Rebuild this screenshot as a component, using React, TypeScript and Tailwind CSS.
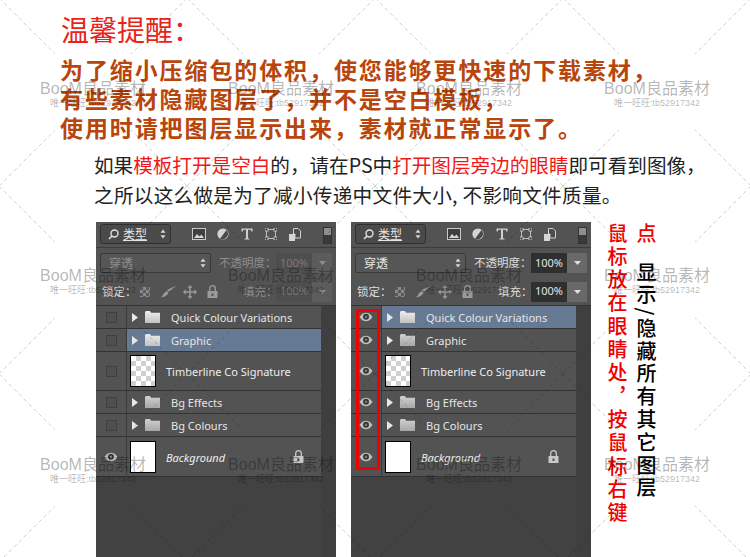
import React from "react";

const cjk = "font-['Noto_Sans_CJK_SC',sans-serif]";

function Eye() {
  return (
    <svg width="14" height="10" viewBox="0 0 14 10">
      <path d="M0.5 5C3 1.5 5 0.8 7 0.8S11 1.5 13.5 5C11 8.5 9 9.2 7 9.2S3 8.5 0.5 5Z" fill="#c0c0c0" />
      <circle cx="7" cy="4.8" r="3" fill="#3a3a3a" />
      <circle cx="7" cy="4.8" r="1.1" fill="#8a8a8a" />
    </svg>
  );
}

function Folder({ dark }: { dark?: boolean }) {
  const id = dark ? "fd" : "fl";
  return (
    <svg width="15" height="12" viewBox="0 0 15 12">
      <defs>
        <linearGradient id={id} x1="0" y1="0" x2="0" y2="1">
          <stop offset="0" stopColor={dark ? "#d0d0d0" : "#eeeeee"} />
          <stop offset="1" stopColor={dark ? "#a8a8a8" : "#c2c2c2"} />
        </linearGradient>
      </defs>
      <path d="M0 12V1.2L0.8 0H5L6 1.8H15V12Z" fill={`url(#${id})`} />
    </svg>
  );
}

function Lock({ color = "#c8c8c8" }: { color?: string }) {
  return (
    <svg width="11" height="13" viewBox="0 0 11 13">
      <path d="M2.7 6V3.5a2.8 2.8 0 0 1 5.6 0V6" fill="none" stroke={color} strokeWidth="1.3" />
      <rect x="0.5" y="6" width="10" height="7" fill={color} />
      <rect x="4.5" y="8.5" width="2" height="2.5" fill="#555" />
    </svg>
  );
}

function Chevron() {
  return (
    <svg width="6" height="10" viewBox="0 0 6 10">
      <path d="M3 0.5L5.5 3.8H0.5ZM3 9.5L5.5 6.2H0.5Z" fill="#d8d8d8" />
    </svg>
  );
}

function TopIcons() {
  return (
    <div className="flex items-center h-[20px]">
      <svg className="ml-[21px]" width="14" height="12" viewBox="0 0 14 12">
        <rect x="0.5" y="0.5" width="13" height="11" fill="#3f3f3f" stroke="#c9c9c9" />
        <path d="M2 10L5 6L7.5 8.5L9.5 6.5L12 10Z" fill="#d5d5d5" />
      </svg>
      <svg className="ml-[11px]" width="12" height="12" viewBox="0 0 12 12">
        <circle cx="6" cy="6" r="5.6" fill="#d4d4d4" />
        <path d="M9.5 2A5.6 5.6 0 0 1 3 10.8Z" fill="#4a4a4a" />
      </svg>
      <svg className="ml-[12px]" width="12" height="12" viewBox="0 0 12 12">
        <path d="M0.5 0.5H11.5V3.5H10.5L9.5 1.8H7V10.2L8.5 10.8V11.5H3.5V10.8L5 10.2V1.8H2.5L1.5 3.5H0.5Z" fill="#d0d0d0" />
      </svg>
      <svg className="ml-[12px]" width="12" height="12" viewBox="0 0 12 12">
        <rect x="1.5" y="1.5" width="9" height="9" fill="none" stroke="#bdbdbd" />
        <rect x="0" y="0" width="3" height="3" fill="#333" stroke="#d8d8d8" strokeWidth="0.8" />
        <rect x="9" y="0" width="3" height="3" fill="#333" stroke="#d8d8d8" strokeWidth="0.8" />
        <rect x="0" y="9" width="3" height="3" fill="#333" stroke="#d8d8d8" strokeWidth="0.8" />
        <rect x="9" y="9" width="3" height="3" fill="#333" stroke="#d8d8d8" strokeWidth="0.8" />
      </svg>
      <svg className="ml-[12px]" width="12" height="13" viewBox="0 0 12 13">
        <path d="M4.5 0.5H9L11.5 3V10H6V6H4.5Z" fill="#4c4c4c" stroke="#d0d0d0" />
        <rect x="0" y="6" width="6" height="7" fill="#d4d4d4" />
      </svg>
    </div>
  );
}

function Row({
  name,
  h,
  eye,
  selected,
  folder,
  thumb,
  italic,
  lock,
  dark,
}: {
  name: string;
  h: string;
  eye: boolean;
  selected: boolean;
  folder?: boolean;
  thumb?: "check" | "white";
  italic?: boolean;
  lock?: boolean;
  dark?: boolean;
}) {
  return (
    <div className={`flex ${h} border-b border-[#333333] ${selected ? "bg-[#667a94]" : "bg-[#535353]"}`}>
      <div className="w-[31px] shrink-0 flex items-center justify-center border-r border-[#3a3a3a] bg-[#535353]">
        {eye ? <Eye /> : <div className="w-[11px] h-[11px] border border-[#3f3f3f] bg-[#4f4f4f]" />}
      </div>
      {folder ? (
        <div className="flex items-center flex-1">
          <svg className="ml-[5px]" width="6" height="9" viewBox="0 0 6 9">
            <path d="M0 0L6 4.5L0 9Z" fill="#e8e8e8" />
          </svg>
          <div className="ml-[7px] flex">
            <Folder dark={dark} />
          </div>
          <span className="ml-[11px] mt-[3px] text-[11px] text-[#e6e6e6] whitespace-nowrap">{name}</span>
        </div>
      ) : (
        <div className="flex items-center flex-1 pl-[3px]">
          <div
            className={`w-[26px] h-[32px] border border-black ${
              thumb === "check"
                ? "bg-white bg-[repeating-conic-gradient(#cfcfcf_0_25%,#ffffff_0_50%)] bg-[length:10px_10px]"
                : "bg-white"
            }`}
          />
          <span className={`ml-[10px] mt-[3px] text-[11px] text-[#eeeeee] whitespace-nowrap ${italic ? "italic" : ""}`}>{name}</span>
          {lock && (
            <div className="ml-auto mr-[17px] flex">
              <Lock />
            </div>
          )}
        </div>
      )}
    </div>
  );
}

function Panel({ active }: { active: boolean }) {
  const label = active ? "text-[#dcdcdc]" : "text-[#8e8e8e]";
  const numBox = active ? "bg-[#2f2f2f] text-[#e4e4e4]" : "bg-[#4e4e4e] text-[#7a7a7a]";
  const drop = active ? "bg-[#696969]" : "bg-[#5c5c5c]";
  const arrow = active ? "#e0e0e0" : "#8c8c8c";
  return (
    <div className="relative w-[240px] h-[335px] bg-[#3f3f3f] shrink-0 flex flex-col font-['Noto_Sans',sans-serif] overflow-hidden">
      <div className="h-[26px] bg-[#535353] border-b border-[#3c3c3c] flex items-start pt-[2px] pl-[4px]">
        <div className="w-[71px] h-[20px] rounded-[3px] border border-[#2f2f2f] bg-[#4a4a4a] flex items-center pl-[7px] pr-[4px]">
          <svg width="11" height="11" viewBox="0 0 11 11">
            <circle cx="6.5" cy="4.5" r="3.5" fill="none" stroke="#e0e0e0" strokeWidth="1.4" />
            <path d="M4 7L1 10" stroke="#e0e0e0" strokeWidth="1.6" />
          </svg>
          <span className={`ml-[4px] text-[12px] leading-none text-[#e6e6e6] underline ${cjk}`}>类型</span>
          <div className="ml-auto flex">
            <Chevron />
          </div>
        </div>
        <TopIcons />
        <div className="ml-[22px] mt-[3px] w-[9px] h-[17px] border border-[#333] bg-[linear-gradient(#8e8e8e_0_50%,#3a3a3a_50%_100%)]" />
      </div>
      <div className="h-[30px] bg-[#535353] flex items-center pl-[4px]">
        <div className={`w-[111px] h-[20px] rounded-[2px] border border-[#3a3a3a] bg-[#565656] flex items-center pl-[8px] pr-[4px] ${cjk}`}>
          <span className={`text-[12px] leading-none ${active ? "text-[#e6e6e6]" : "text-[#8e8e8e]"}`}>穿透</span>
          <div className="ml-auto flex">
            <Chevron />
          </div>
        </div>
        <span className={`ml-[8px] w-[57px] text-[11.5px] leading-none whitespace-nowrap ${label} ${cjk}`}>不透明度：</span>
        <div className={`w-[36px] h-[20px] flex items-center justify-center text-[11px] ${numBox}`}>100%</div>
        <div className={`w-[20px] h-[20px] flex items-center justify-center ${drop}`}>
          <svg width="7" height="4" viewBox="0 0 7 4">
            <path d="M0 0H7L3.5 4Z" fill={arrow} />
          </svg>
        </div>
      </div>
      <div className="h-[28px] bg-[#535353] border-b border-[#333333] flex items-center pl-[6px]">
        <span className={`w-[38px] text-[11.5px] leading-none text-[#dcdcdc] whitespace-nowrap ${cjk}`}>锁定：</span>
        <div className="w-[10px] h-[10px] bg-[repeating-conic-gradient(#8a8a8a_0_25%,#5a5a5a_0_50%)] bg-[length:6px_6px]" />
        <svg className="ml-[10px]" width="18" height="13" viewBox="0 0 16 12">
          <path d="M15 0.5L8 6L6 4.5L15 0.5ZM6 5.5L7.5 7C6.5 10 3 11.5 0.5 11.5C2.5 10 3 7 6 5.5Z" fill="#9a9a9a" />
        </svg>
        <svg className="ml-[5px]" width="14" height="14" viewBox="0 0 13 13">
          <path d="M6.5 0L9 2.5H7.2V5.8H10.5V4L13 6.5L10.5 9V7.2H7.2V10.5H9L6.5 13L4 10.5H5.8V7.2H2.5V9L0 6.5L2.5 4V5.8H5.8V2.5H4Z" fill="#9a9a9a" />
        </svg>
        <div className="ml-[10px] flex">
          <Lock color="#9a9a9a" />
        </div>
        <span className={`ml-[25px] w-[33px] text-[11.5px] leading-none whitespace-nowrap ${label} ${cjk}`}>填充：</span>
        <div className={`w-[36px] h-[20px] flex items-center justify-center text-[11px] ${numBox}`}>100%</div>
        <div className={`w-[20px] h-[20px] flex items-center justify-center ${drop}`}>
          <svg width="7" height="4" viewBox="0 0 7 4">
            <path d="M0 0H7L3.5 4Z" fill={arrow} />
          </svg>
        </div>
      </div>
      <div className="w-[225px] flex flex-col">
        <Row name="Quick Colour Variations" h="h-[23px]" eye={active} selected={active} folder />
        <Row name="Graphic" h="h-[23px]" eye={active} selected={!active} folder dark={active} />
        <Row name="Timberline Co Signature" h="h-[39px]" eye={active} selected={false} thumb="check" />
        <Row name="Bg Effects" h="h-[23px]" eye={active} selected={false} folder dark />
        <Row name="Bg Colours" h="h-[23px]" eye={active} selected={false} folder dark />
        <Row name="Background" h="h-[40px]" eye selected={false} thumb="white" italic lock />
      </div>
      <div className="w-[225px] flex-1 bg-[#424242]" />
      {active && <div className="absolute left-[5px] top-[87px] w-[24px] h-[161px] border-[3px] border-[#f00000]" />}
    </div>
  );
}

function Mark({ x, y }: { x: number; y: number }) {
  return (
    <div className="absolute w-[108px] flex flex-col items-center" style={{ left: x, top: y }}>
      <span className="text-[16px] leading-[19px] text-black/30 whitespace-nowrap font-['Liberation_Sans','Noto_Sans_CJK_SC',sans-serif]">BooM良品素材</span>
      <span className="text-[9px] leading-[11px] text-black/30 whitespace-nowrap font-['Liberation_Sans','Noto_Sans_CJK_SC',sans-serif]">唯一旺旺:tb52917342</span>
    </div>
  );
}

export default function App() {
  const xs = [39, 227, 415, 603];
  const ys = [79, 266, 455];
  return (
    <div className={`relative w-[750px] h-[557px] bg-white overflow-hidden flex flex-col ${cjk}`}>
      <div className="pl-[61px] pt-[10px] h-[51px] text-[28px] leading-[38px] text-[#e8241a]">温馨提醒：</div>
      <div className="pl-[60px] pt-[4px] text-[23px] leading-[29px] font-bold text-[#b8450c] tracking-[1.9px] whitespace-nowrap">
        <div>为了缩小压缩包的体积，使您能够更快速的下载素材，</div>
        <div>有些素材隐藏图层了，并不是空白模板，</div>
        <div>使用时请把图层显示出来，素材就正常显示了。</div>
      </div>
      <div className="pl-[94px] pt-[8px] text-[19.6px] leading-[30px] text-[#222222] whitespace-nowrap">
        <div>
          如果<span className="text-[#f01818]">模板打开是空白</span>的，请在PS中<span className="text-[#f01818]">打开图层旁边的眼睛</span>即可看到图像，
        </div>
        <div className="tracking-[0.3px]">之所以这么做是为了减小传递中文件大小, 不影响文件质量。</div>
      </div>
      <div className="flex pl-[96px] mt-[12px]">
        <Panel active={false} />
        <div className="w-[15px] shrink-0" />
        <Panel active />
        <div className="ml-[12px] mt-[1px] h-[310px] [writing-mode:vertical-rl] text-[20px] leading-[29px] tracking-[3.3px] whitespace-nowrap">
          <div>
            <span className="text-[#f00000] font-medium">点</span>
            <span className="mt-[16px] inline-block text-black font-medium tracking-[2.8px]">显示/隐藏所有其它图层</span>
          </div>
          <div className="text-[#f00000] font-medium">鼠标放在眼睛处，按鼠标右键</div>
        </div>
      </div>

      <svg className="absolute inset-0 pointer-events-none" width="750" height="557">
        <defs>
          <pattern id="wm" x="-1" y="-2" width="188" height="188" patternUnits="userSpaceOnUse">
            <g stroke="#000000" strokeOpacity="0.18" strokeWidth="1" strokeDasharray="4 3">
              <path d="M0 0L56 56" />
              <path d="M188 0L132 56" />
              <path d="M0 188L56 132" />
              <path d="M188 188L132 132" />
            </g>
          </pattern>
        </defs>
        <rect width="750" height="557" fill="url(#wm)" />
      </svg>
      {ys.map((y) => xs.map((x) => <Mark key={`${x}-${y}`} x={x} y={y} />))}
    </div>
  );
}
